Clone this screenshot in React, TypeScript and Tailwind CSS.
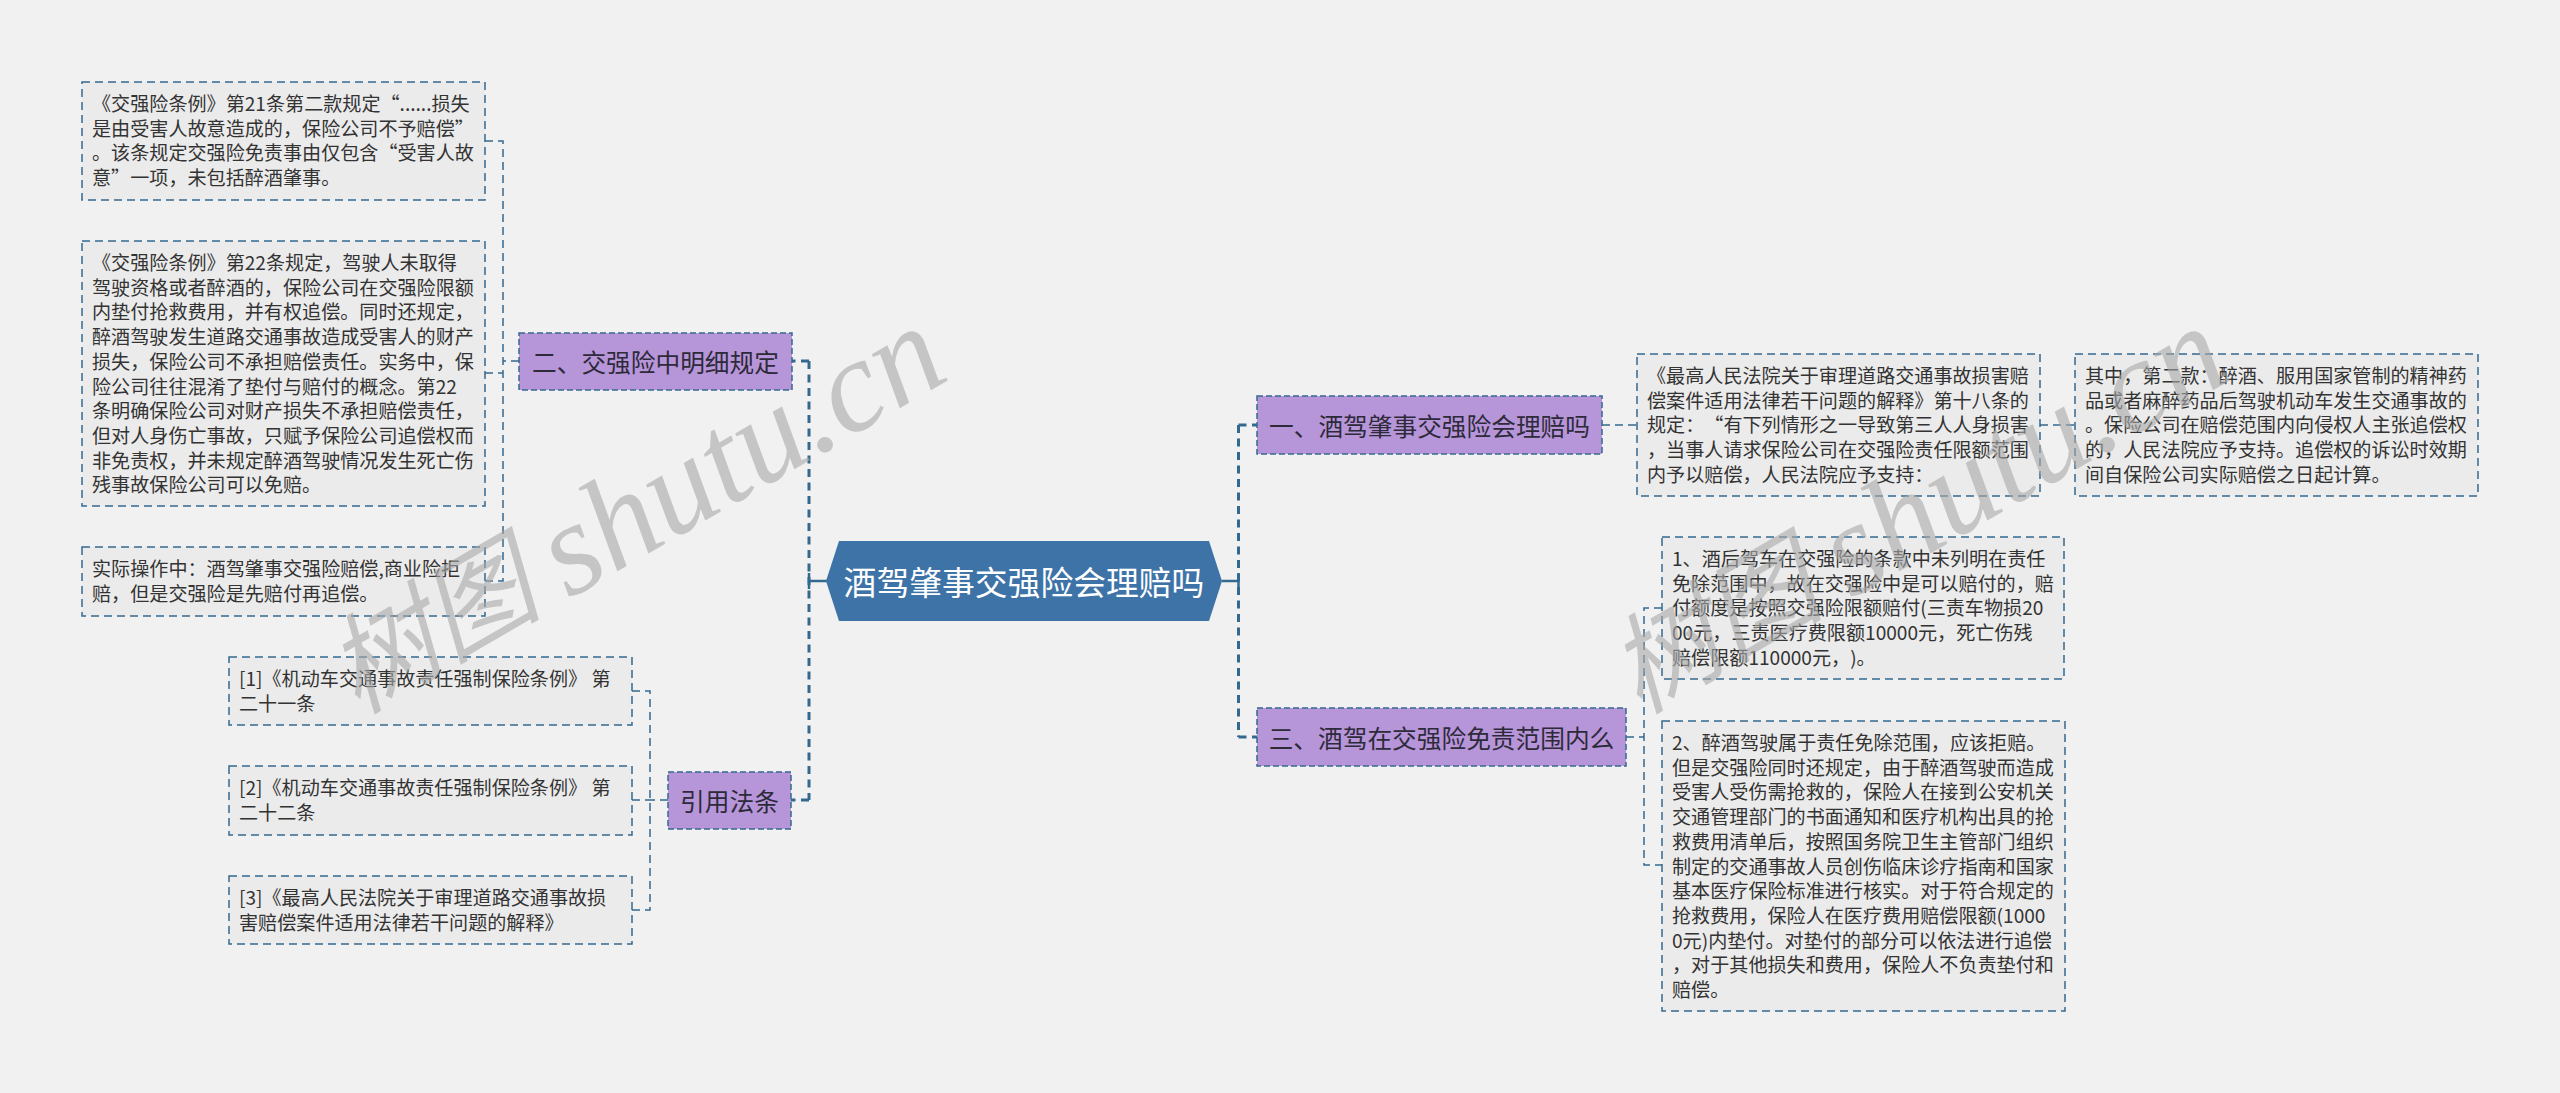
import React from "react";

const CJK = "[font-family:'Noto_Sans_CJK_SC','Liberation_Sans',sans-serif] [text-spacing-trim:space-all]";

function DashedEdge({ dash, width }: { dash: string; width: number }) {
  return (
    <svg className="absolute inset-0 w-full h-full overflow-visible" aria-hidden="true">
      <rect x="0" y="0" width="100%" height="100%" fill="none" stroke="#34698f" strokeWidth={width} strokeDasharray={dash} />
    </svg>
  );
}

function Note({ className, lines }: { className: string; lines: string[] }) {
  return (
    <div className={`absolute bg-[#ebebeb] pt-[9px] pl-[10px] text-[19.1px] leading-[24.7px] text-[#333333] whitespace-nowrap ${className}`}>
      <DashedEdge dash="8 5" width={1.5} />
      <div className="relative">
        {lines.map((l, i) => (
          <div key={i}>{l}</div>
        ))}
      </div>
    </div>
  );
}

function Topic({ className, text }: { className: string; text: string }) {
  return (
    <div className={`absolute bg-[#b795d9] flex items-center justify-center text-[24.7px] leading-none text-[#2d2a3a] whitespace-nowrap ${className}`}>
      <DashedEdge dash="6 3" width={1.5} />
      <span className="relative">{text}</span>
    </div>
  );
}

function Connectors() {
  const c = "#34698f";
  return (
    <svg className="absolute inset-0 w-[2560px] h-[1093px]" aria-hidden="true">
      <g fill="none" stroke={c} strokeWidth="3" strokeDasharray="8 5.5">
        <path d="M809 361H792" />
        <path d="M809 361V800" />
        <path d="M809 800H791" />
        <path d="M1238.5 425V737" />
        <path d="M1238.5 425H1257" />
        <path d="M1238.5 737H1257" />
      </g>
      <g fill="none" stroke={c} strokeWidth="2.5">
        <path d="M809 581H827" />
        <path d="M809 573V589" />
        <path d="M1222 581H1238.5" />
        <path d="M1238.5 573V589" />
      </g>
      <g fill="none" stroke={c} strokeWidth="1.5" strokeDasharray="8 5">
        <path d="M519 361H503" />
        <path d="M485 141H503V581H485" />
        <path d="M485 373H503" />
        <path d="M668 800H650" />
        <path d="M632 691H650V910H632" />
        <path d="M632 800H650" />
        <path d="M1602 425H1637" />
        <path d="M2040 425H2075" />
        <path d="M1626 737H1644" />
        <path d="M1662 608H1644V865H1662" />
      </g>
    </svg>
  );
}

function Watermark({ className }: { className: string }) {
  return (
    <div className={`absolute origin-bottom-left -rotate-30 italic text-[132px] leading-none whitespace-nowrap text-[#a8a8a8]/60 [font-family:'Liberation_Serif','Noto_Sans_CJK_SC',serif] ${className}`}>
      <span className="relative -top-[6px] mr-[-8px] text-[108px]">树图</span> shutu.cn
    </div>
  );
}

export default function App() {
  return (
    <div className={`relative w-[2560px] h-[1093px] overflow-hidden bg-[#f1f1f1] ${CJK}`}>
      <Connectors />

      <Note
        className="left-[82px] top-[82px] w-[403px] h-[118px]"
        lines={[
          "《交强险条例》第21条第二款规定“......损失",
          "是由受害人故意造成的，保险公司不予赔偿”",
          "。该条规定交强险免责事由仅包含“受害人故",
          "意”一项，未包括醉酒肇事。",
        ]}
      />
      <Note
        className="left-[82px] top-[241px] w-[403px] h-[265px]"
        lines={[
          "《交强险条例》第22条规定，驾驶人未取得",
          "驾驶资格或者醉酒的，保险公司在交强险限额",
          "内垫付抢救费用，并有权追偿。同时还规定，",
          "醉酒驾驶发生道路交通事故造成受害人的财产",
          "损失，保险公司不承担赔偿责任。实务中，保",
          "险公司往往混淆了垫付与赔付的概念。第22",
          "条明确保险公司对财产损失不承担赔偿责任，",
          "但对人身伤亡事故，只赋予保险公司追偿权而",
          "非免责权，并未规定醉酒驾驶情况发生死亡伤",
          "残事故保险公司可以免赔。",
        ]}
      />
      <Note
        className="left-[82px] top-[547px] w-[403px] h-[69px]"
        lines={["实际操作中：酒驾肇事交强险赔偿,商业险拒", "赔，但是交强险是先赔付再追偿。"]}
      />

      <Note
        className="left-[229px] top-[657px] w-[403px] h-[68px]"
        lines={["[1]《机动车交通事故责任强制保险条例》 第", "二十一条"]}
      />
      <Note
        className="left-[229px] top-[766px] w-[403px] h-[69px]"
        lines={["[2]《机动车交通事故责任强制保险条例》 第", "二十二条"]}
      />
      <Note
        className="left-[229px] top-[876px] w-[403px] h-[68px]"
        lines={["[3]《最高人民法院关于审理道路交通事故损", "害赔偿案件适用法律若干问题的解释》"]}
      />

      <Topic className="left-[519px] top-[333px] w-[273px] h-[57px]" text="二、交强险中明细规定" />
      <Topic className="left-[668px] top-[772px] w-[123px] h-[57px]" text="引用法条" />
      <Topic className="left-[1257px] top-[396px] w-[345px] h-[58px]" text="一、酒驾肇事交强险会理赔吗" />
      <Topic className="left-[1257px] top-[708px] w-[369px] h-[58px]" text="三、酒驾在交强险免责范围内么" />

      <div className="absolute left-[826px] top-[541px] w-[396px] h-[80px] bg-[#3e73a7] flex items-center justify-center text-[32.8px] leading-none text-white whitespace-nowrap [clip-path:polygon(13px_0,383px_0,100%_50%,383px_100%,13px_100%,0_50%)]">
        酒驾肇事交强险会理赔吗
      </div>

      <Note
        className="left-[1637px] top-[354px] w-[403px] h-[142px]"
        lines={[
          "《最高人民法院关于审理道路交通事故损害赔",
          "偿案件适用法律若干问题的解释》第十八条的",
          "规定：“有下列情形之一导致第三人人身损害",
          "，当事人请求保险公司在交强险责任限额范围",
          "内予以赔偿，人民法院应予支持：",
        ]}
      />
      <Note
        className="left-[2075px] top-[354px] w-[403px] h-[142px]"
        lines={[
          "其中，第二款：醉酒、服用国家管制的精神药",
          "品或者麻醉药品后驾驶机动车发生交通事故的",
          "。保险公司在赔偿范围内向侵权人主张追偿权",
          "的，人民法院应予支持。追偿权的诉讼时效期",
          "间自保险公司实际赔偿之日起计算。",
        ]}
      />
      <Note
        className="left-[1662px] top-[537px] w-[402px] h-[142px]"
        lines={[
          "1、酒后驾车在交强险的条款中未列明在责任",
          "免除范围中，故在交强险中是可以赔付的，赔",
          "付额度是按照交强险限额赔付(三责车物损20",
          "00元，三责医疗费限额10000元，死亡伤残",
          "赔偿限额110000元，)。",
        ]}
      />
      <Note
        className="left-[1662px] top-[721px] w-[403px] h-[290px]"
        lines={[
          "2、醉酒驾驶属于责任免除范围，应该拒赔。",
          "但是交强险同时还规定，由于醉酒驾驶而造成",
          "受害人受伤需抢救的，保险人在接到公安机关",
          "交通管理部门的书面通知和医疗机构出具的抢",
          "救费用清单后，按照国务院卫生主管部门组织",
          "制定的交通事故人员创伤临床诊疗指南和国家",
          "基本医疗保险标准进行核实。对于符合规定的",
          "抢救费用，保险人在医疗费用赔偿限额(1000",
          "0元)内垫付。对垫付的部分可以依法进行追偿",
          "，对于其他损失和费用，保险人不负责垫付和",
          "赔偿。",
        ]}
      />

      <Watermark className="left-[371px] top-[607px]" />
      <Watermark className="left-[1653px] top-[607px]" />
    </div>
  );
}
